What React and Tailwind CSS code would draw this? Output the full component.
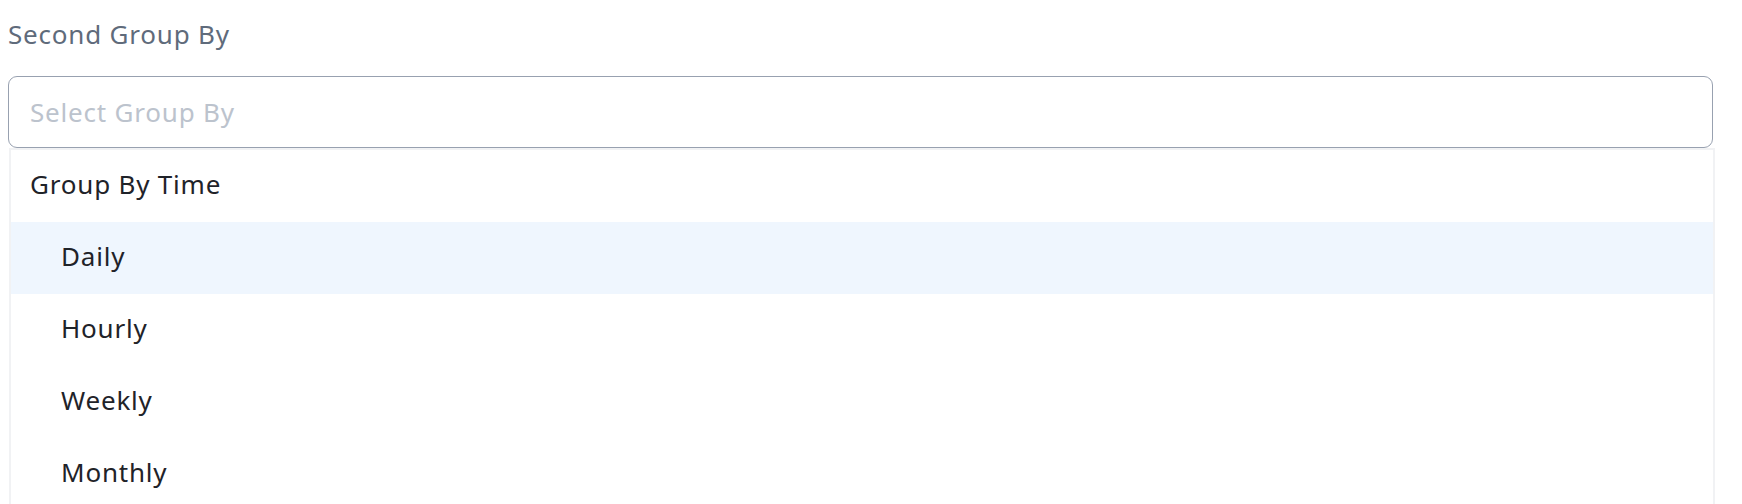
export default function App() {
  const items = ["Daily", "Hourly", "Weekly", "Monthly"];
  return (
    <div className="w-[1742px] h-[504px] overflow-hidden bg-white font-['Noto_Sans',sans-serif] text-[26px] tracking-[0.8px]">
      <div className="pl-2 w-[1713px]">
        <div className="h-[76px] pt-[15px] leading-[38px] text-[#5f6b7b]">Second Group By</div>
        <div className="h-[72px] rounded-[9px] border-[1.5px] border-[#98a1b0] flex items-center pl-[21px] text-[#bcc3cd]">
          Select Group By
        </div>
        <div className="ml-[1px] w-[1706px] border-x-2 border-t-2 border-[#f1f2f4]">
          <div className="h-[72px] flex items-center pl-[19px] pb-[3px] text-[#1f2329]">Group By Time</div>
          {items.map((it, i) => (
            <div
              key={it}
              className={
                i === 0
                  ? "h-[72px] flex items-center pl-[50px] pb-[3px] text-[#1f2329] bg-[#eff6fe]"
                  : "h-[72px] flex items-center pl-[50px] pb-[3px] text-[#1f2329]"
              }
            >
              {it}
            </div>
          ))}
        </div>
      </div>
    </div>
  );
}
